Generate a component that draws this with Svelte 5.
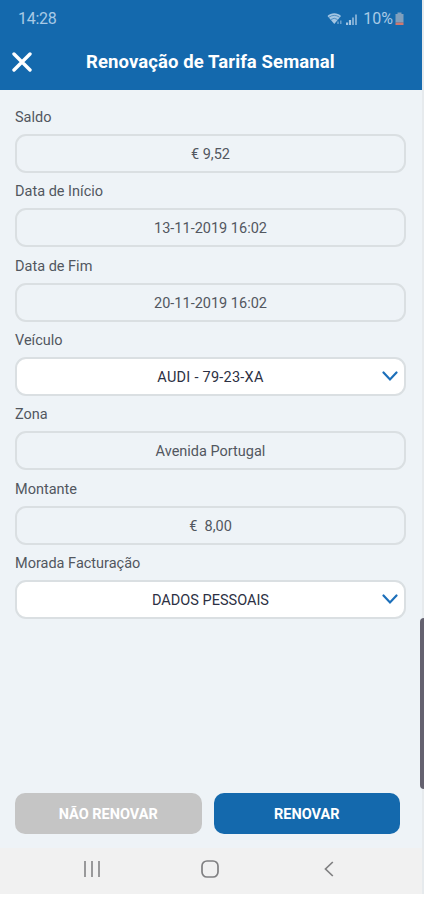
<script lang="ts">
  type Field = {
    id: string;
    label: string;
    value: string;
    select?: boolean;
    wide?: boolean;
  };

  const fields: Field[] = [
    { id: "saldo", label: "Saldo", value: "€ 9,52" },
    { id: "inicio", label: "Data de Início", value: "13-11-2019 16:02" },
    { id: "fim", label: "Data de Fim", value: "20-11-2019 16:02" },
    { id: "veiculo", label: "Veículo", value: "AUDI - 79-23-XA", select: true, wide: true },
    { id: "zona", label: "Zona", value: "Avenida Portugal" },
    { id: "montante", label: "Montante", value: "€  8,00" },
    { id: "morada", label: "Morada Facturação", value: "DADOS PESSOAIS", select: true },
  ];
</script>

<div class="screen">
  <header>
    <div class="status">
      <span class="time">14:28</span>
      <div class="indicators">
        <svg class="wifi" width="16" height="14" viewBox="0 0 16 14">
          <path d="M0.5 4C4 0.2 10.5 0.2 14 4L7.25 12Z" fill="#a4c6e3" />
          <path d="M2 5.2Q7.25 1.5 12.5 5.2M4 7.5Q7.25 5 10.5 7.5" fill="none" stroke="#1569ad" stroke-width="0.6" />
          <path d="M11 12V9.5M13.8 8.5V12" stroke="#7aaad2" stroke-width="1.3" />
        </svg>
        <svg class="signal" width="11" height="11" viewBox="0 0 11 11">
          <path d="M1 11V8.5M4 11V6" stroke="#a4c6e3" stroke-width="2.2" />
          <path d="M7 11V3.5M10 11V0.5" stroke="#7aaad2" stroke-width="2" />
        </svg>
        <span class="percent">10%</span>
        <svg class="battery" width="9" height="14" viewBox="0 0 9 14">
          <path d="M2.5 0.5h4v1.5H8.5V10.5H0.5V2H2.5Z" fill="#7f9fbd" />
          <path d="M0.5 10.5h8V13h-8Z" fill="#d0786f" />
        </svg>
      </div>
    </div>
    <div class="title-bar">
      <button class="close" aria-label="Fechar">
        <svg width="20" height="20" viewBox="0 0 20 20">
          <path d="M2 2L18 18M18 2L2 18" stroke="#fff" stroke-width="3.4" stroke-linecap="round" />
        </svg>
      </button>
      <h1>Renovação de Tarifa Semanal</h1>
    </div>
  </header>

  <main>
    {#each fields as field (field.id)}
      <div class="field">
        <span class="label">{field.label}</span>
        <div class="box" class:select={field.select}>
          <span class="value" class:wide={field.wide}>{field.value}</span>
          {#if field.select}
            <svg class="chevron" width="16" height="11" viewBox="0 0 16 11">
              <path d="M1.5 1.5L8 8.5L14.5 1.5" fill="none" stroke="#1c6fba" stroke-width="2.2" stroke-linecap="round" />
            </svg>
          {/if}
        </div>
      </div>
    {/each}
  </main>

  <div class="actions">
    <button class="action muted">NÃO RENOVAR</button>
    <button class="action">RENOVAR</button>
  </div>

  <nav>
    <svg width="16" height="16" viewBox="0 0 16 16">
      <path d="M1 0V16M8 0V16M15 0V16" stroke="#8a8a8c" stroke-width="1.7" />
    </svg>
    <svg class="home" width="18" height="18" viewBox="0 0 18 18">
      <rect x="1" y="1" width="16" height="16" rx="5" fill="none" stroke="#808082" stroke-width="1.7" />
    </svg>
    <svg width="10" height="16" viewBox="0 0 10 16">
      <path d="M8.8 1L1.5 8L8.8 15" fill="none" stroke="#808082" stroke-width="1.7" />
    </svg>
  </nav>
  <div class="edge-handle"></div>
</div>

<style>
  :global(body) {
    background: #fff;
  }

  .screen {
    position: relative;
    display: flex;
    flex-direction: column;
    width: 424px;
    height: 894px;
    box-sizing: border-box;
    border-right: 2px solid #e6eaed;
    background: #eef3f7;
    font-family: Roboto, sans-serif;
    color: #52575f;
  }

  header {
    height: 90px;
    background: #1469ad;
  }

  .status {
    display: flex;
    align-items: center;
    justify-content: space-between;
    height: 37px;
    padding: 0 18px;
    color: #a8cae6;
    font-size: 16px;
  }

  .time {
    letter-spacing: -0.3px;
  }

  .indicators {
    display: flex;
    align-items: center;
  }

  .signal {
    margin: 1px 6px 0 3px;
  }

  .percent {
    margin-right: 2px;
  }

  .title-bar {
    display: flex;
    align-items: center;
    height: 49px;
    padding-left: 12px;
  }

  button {
    border: 0;
    font-family: inherit;
  }

  .close {
    display: flex;
    padding: 0;
    background: none;
  }

  h1 {
    margin: 1px 0 0 54px;
    color: #fff;
    font-size: 18.5px;
    font-weight: 700;
    letter-spacing: 0.1px;
    white-space: nowrap;
  }

  main {
    flex: 1;
    padding: 8px 16px 0 15px;
  }

  .field {
    height: 74.35px;
  }

  .label {
    display: block;
    height: 36px;
    line-height: 40px;
    font-size: 14.5px;
  }

  .box {
    display: flex;
    align-items: center;
    justify-content: center;
    position: relative;
    height: 39px;
    box-sizing: border-box;
    border: 2px solid #dadfe2;
    border-radius: 11px;
    font-size: 14.5px;
  }

  .select {
    background: #fff;
    color: #2c3043;
  }

  .value {
    padding-top: 2px;
    white-space: pre;
  }

  .wide {
    letter-spacing: 0.25px;
  }

  .chevron {
    position: absolute;
    right: 6px;
    top: 12px;
  }

  .actions {
    display: flex;
    gap: 12px;
    padding: 0 22px 14px 15px;
  }

  .action {
    flex: 1;
    height: 41px;
    padding: 2px 0 0;
    border-radius: 10px;
    background: #1469ad;
    color: #fff;
    font-size: 14.5px;
    font-weight: 700;
  }

  .muted {
    background: #c5c5c5;
  }

  nav {
    display: flex;
    align-items: center;
    justify-content: space-between;
    height: 46px;
    box-sizing: border-box;
    padding: 0 88px 4px 84px;
    background: #f1f1f1;
  }

  .home {
    margin-right: 4px;
  }

  .edge-handle {
    position: absolute;
    right: -2px;
    top: 618px;
    width: 4px;
    height: 171px;
    border-radius: 4px 0 0 4px;
    background: #64616f;
  }
</style>
